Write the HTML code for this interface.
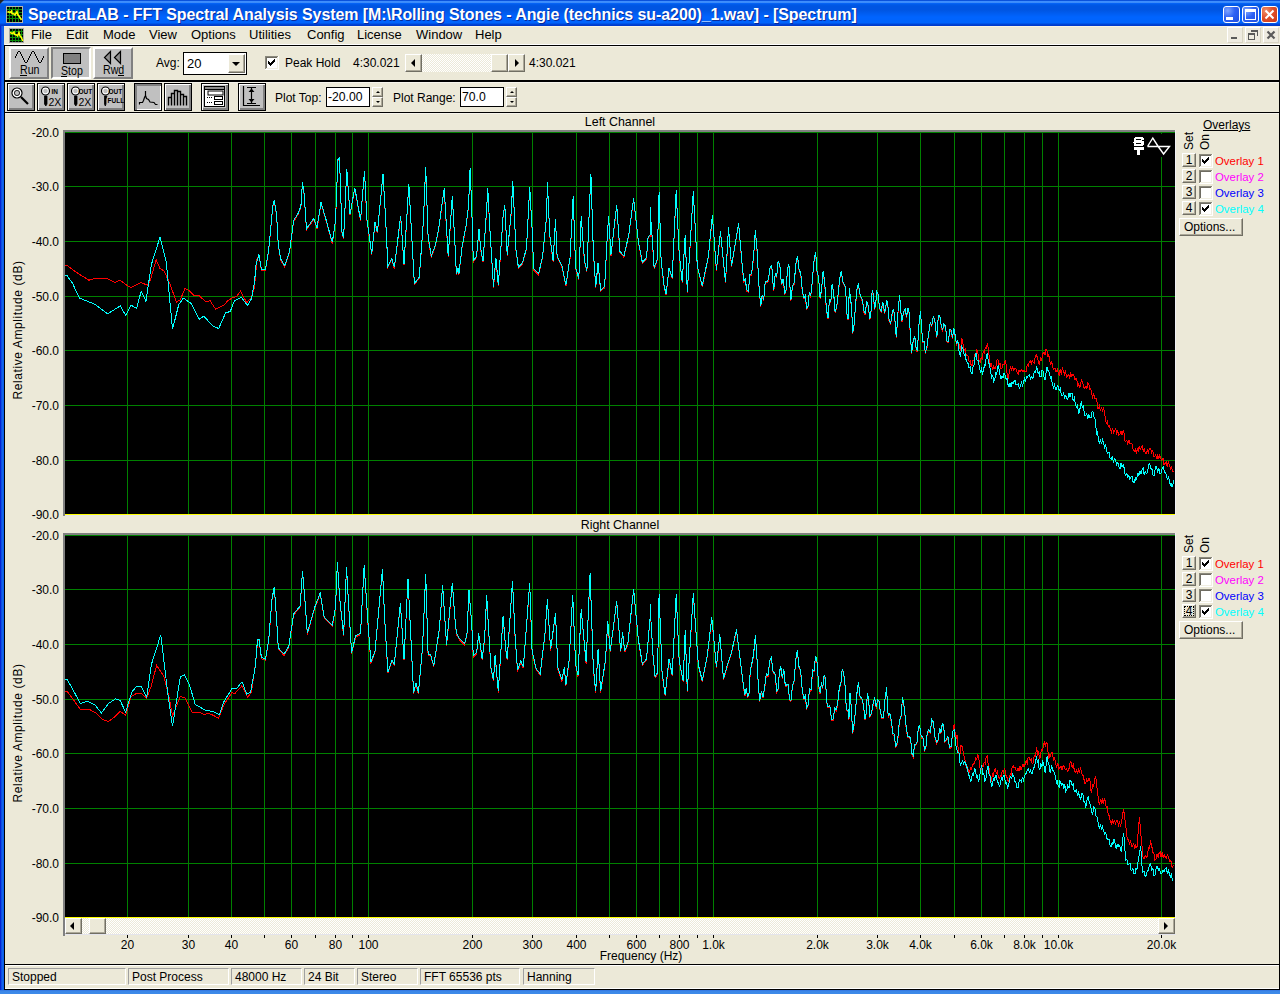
<!DOCTYPE html>
<html><head><meta charset="utf-8">
<style>
*{margin:0;padding:0;box-sizing:border-box}
html,body{width:1280px;height:994px;overflow:hidden;background:#ECE9D8;font-family:"Liberation Sans",sans-serif;font-size:12px;color:#000}
.a{position:absolute}
.t{position:absolute;white-space:nowrap;line-height:1}
.tb{position:absolute;top:6px;width:17px;height:17px;border:1px solid #fff;border-radius:3px}
.rb{position:absolute;background:#C0C0C0;border-style:solid;border-width:2px;border-color:#fff #808080 #808080 #fff}
.btn{position:absolute;background:#C0C0C0;border:1px solid #000;box-shadow:inset 1px 1px 0 #fff,inset -1px -1px 0 #808080,inset -2px -2px 0 #808080}
.btnp{position:absolute;background:#C0C0C0;border:1px solid #000;box-shadow:inset 1px 1px 0 #808080,inset 2px 2px 0 #808080,inset -1px -1px 0 #fff}
.xpb{position:absolute;background:#ECE9D8;border:1px solid;border-color:#fff #716F64 #716F64 #fff;box-shadow:inset -1px -1px 0 #ACA899}
.hline{position:absolute;left:4px;width:1276px;height:1px;background:#000}
.ico{position:absolute;left:0;top:0}
</style></head>
<body>
<!-- left blue frame -->
<div class="a" style="left:0;top:0;width:4px;height:990px;background:linear-gradient(90deg,#0019CF 0,#0831D9 1px,#166AEE 2px,#0D5FEA 3px)"></div>
<div class="a" style="left:0;top:990px;width:1280px;height:4px;background:linear-gradient(#2F6FE0,#3B86E6 1px,#3E8BEA 4px)"></div>
<!-- title bar -->
<div class="a" style="left:0;top:0;width:1280px;height:26px;background:linear-gradient(#0A52DC 0,#0A52DC 1px,#3F8FFF 1px,#3A8AF8 3px,#0A68FF 3px,#005DEC 4px,#0055E2 6px,#0055E2 10px,#005CEF 13px,#0064FF 17px,#0064FC 23px,#0048D8 24px,#0036C8 26px)"></div>
<div class="a" style="left:0;top:0;width:4px;height:4px;background:linear-gradient(135deg,#222 0,#222 45%,transparent 55%)"></div>
<svg class="a" style="left:6px;top:6px" width="17" height="17" shape-rendering="crispEdges">
<rect x="0" y="0" width="17" height="17" fill="#B8B4A8"/>
<rect x="1" y="1" width="15" height="15" fill="#000"/>
<path d="M1 3.5H16M1 6.5H16M1 9.5H16M1 12.5H16M3.5 1V16M6.5 1V16M9.5 1V16M12.5 1V16" stroke="#0B8A0B" stroke-width="1"/>
<polyline points="1.5,5.5 4,6.5 5.5,5 6,7.5 8,8 9,9 11,5.5 12,9 13,10 15.5,14" fill="none" stroke="#FFFF00" stroke-width="1.6" shape-rendering="auto"/>
</svg>
<div class="t" style="left:28px;top:7px;font-size:16px;font-weight:bold;color:#fff;letter-spacing:-0.08px;text-shadow:1px 1px 0 #0A2A9A">SpectraLAB - FFT Spectral Analysis System [M:\Rolling Stones - Angie (technics su-a200)_1.wav] - [Spectrum]</div>
<!-- title buttons -->
<div class="tb" style="left:1223px;background:radial-gradient(circle at 25% 25%,#7FA6FF 0,#2E62F4 45%,#1E4EE0 100%)"></div>
<div class="a" style="left:1226px;top:17px;width:7px;height:3px;background:#fff"></div>
<div class="tb" style="left:1242px;background:radial-gradient(circle at 25% 25%,#7FA6FF 0,#2E62F4 45%,#1E4EE0 100%)"></div>
<div class="a" style="left:1245px;top:9px;width:11px;height:11px;border:1px solid #fff;border-top-width:3px"></div>
<div class="tb" style="left:1261px;background:radial-gradient(circle at 25% 25%,#F0906A 0,#E0502A 45%,#C8381A 100%)"></div>
<svg class="a" style="left:1261px;top:6px" width="17" height="17"><path d="M4.5 4.5L12.5 12.5M12.5 4.5L4.5 12.5" stroke="#fff" stroke-width="2"/></svg>

<!-- menu bar -->
<div class="a" style="left:4px;top:26px;width:1276px;height:1px;background:#F8F4E4"></div>
<svg class="a" style="left:9px;top:28px" width="15" height="15" shape-rendering="crispEdges">
<rect x="0" y="0" width="15" height="15" fill="#A8A8A8"/>
<rect x="1" y="1" width="13" height="13" fill="#000"/>
<path d="M1 3.5H14M1 6.5H14M1 9.5H14M1 12.5H14M3.5 1V14M6.5 1V14M9.5 1V14M12.5 1V14" stroke="#0B8A0B" stroke-width="1"/>
<polyline points="1,4.5 3.5,5.5 5,4 5.5,6.5 7.5,7 8.5,8 10,4.5 11,8 12,9 14,13" fill="none" stroke="#FFFF00" stroke-width="1.5" shape-rendering="auto"/>
</svg>
<div class="t" style="left:31px;top:28px;font-size:13px">File</div>
<div class="t" style="left:66px;top:28px;font-size:13px">Edit</div>
<div class="t" style="left:103px;top:28px;font-size:13px">Mode</div>
<div class="t" style="left:149px;top:28px;font-size:13px">View</div>
<div class="t" style="left:191px;top:28px;font-size:13px">Options</div>
<div class="t" style="left:249px;top:28px;font-size:13px">Utilities</div>
<div class="t" style="left:307px;top:28px;font-size:13px">Config</div>
<div class="t" style="left:357px;top:28px;font-size:13px">License</div>
<div class="t" style="left:416px;top:28px;font-size:13px">Window</div>
<div class="t" style="left:475px;top:28px;font-size:13px">Help</div>
<!-- MDI buttons -->
<div class="a" style="left:1227px;top:27px;width:16px;height:16px;background:#EEEBE0;border:1px solid;border-color:#fff #D8D4C4 #D8D4C4 #fff"></div>
<div class="a" style="left:1231px;top:37px;width:6px;height:2px;background:#5A5A5A"></div>
<div class="a" style="left:1245px;top:27px;width:16px;height:16px;background:#EEEBE0;border:1px solid;border-color:#fff #D8D4C4 #D8D4C4 #fff"></div>
<svg class="a" style="left:1245px;top:27px" width="16" height="16" shape-rendering="crispEdges"><path d="M6 3.5H12.5V9M6.5 3V5M3 6.5H9.5M3.5 6V12.5H9.5V6" fill="none" stroke="#5A5A5A" stroke-width="1"/><rect x="6" y="3" width="7" height="2" fill="#5A5A5A"/><rect x="3" y="6" width="7" height="2" fill="#5A5A5A"/></svg>
<div class="a" style="left:1263px;top:27px;width:16px;height:16px;background:#EEEBE0;border:1px solid;border-color:#fff #D8D4C4 #D8D4C4 #fff"></div>
<svg class="a" style="left:1263px;top:27px" width="16" height="16"><path d="M4.5 4.5L11.5 11.5M11.5 4.5L4.5 11.5" stroke="#5A5A5A" stroke-width="2.2"/></svg>

<div class="a" style="left:5px;top:44px;width:1275px;height:1px;background:#fff"></div>
<div class="hline" style="top:45px"></div>
<div class="a" style="left:5px;top:46px;width:1274px;height:1px;background:#F6F4EC"></div>
<div class="hline" style="top:80px;height:2px"></div>
<div class="a" style="left:5px;top:82px;width:1274px;height:1px;background:#F6F4EC"></div>
<div class="hline" style="top:112px"></div>
<div class="a" style="left:5px;top:113px;width:1274px;height:1px;background:#F6F4EC"></div>

<!-- toolbar 1 -->
<div class="rb" style="left:9px;top:47px;width:40px;height:32px"></div>
<div class="a" style="left:51px;top:47px;width:40px;height:32px;background:#C0C0C0;border-style:solid;border-width:2px;border-color:#808080 #fff #fff #808080"></div>
<div class="rb" style="left:93px;top:47px;width:40px;height:32px"></div>
<svg class="ico" width="140" height="80" shape-rendering="crispEdges">
<g fill="#000"><rect x="15" y="56" width="1" height="2"/><rect x="16" y="54" width="1" height="2"/><rect x="17" y="52" width="1" height="2"/><rect x="18" y="51" width="1" height="1"/><rect x="19" y="51" width="1" height="1"/><rect x="20" y="52" width="1" height="2"/><rect x="21" y="54" width="1" height="2"/><rect x="22" y="56" width="1" height="2"/><rect x="23" y="58" width="1" height="2"/><rect x="24" y="60" width="1" height="2"/><rect x="25" y="62" width="1" height="1"/><rect x="26" y="62" width="1" height="1"/><rect x="27" y="60" width="1" height="2"/><rect x="28" y="58" width="1" height="2"/><rect x="29" y="56" width="1" height="2"/><rect x="30" y="54" width="1" height="2"/><rect x="31" y="52" width="1" height="2"/><rect x="32" y="51" width="1" height="1"/><rect x="33" y="51" width="1" height="1"/><rect x="34" y="52" width="1" height="2"/><rect x="35" y="54" width="1" height="2"/><rect x="36" y="56" width="1" height="2"/><rect x="37" y="58" width="1" height="2"/><rect x="38" y="60" width="1" height="2"/><rect x="39" y="62" width="1" height="1"/><rect x="40" y="62" width="1" height="1"/><rect x="41" y="60" width="1" height="2"/><rect x="42" y="58" width="1" height="2"/><rect x="43" y="56" width="1" height="2"/></g>
<rect x="63" y="53" width="18" height="11" fill="#000"/><rect x="64" y="54" width="16" height="9" fill="#808080"/>
<path d="M110.5,51.5 L104.5,57.5 L110.5,63.5 Z M120.5,51.5 L114.5,57.5 L120.5,63.5 Z" fill="#909090" stroke="#000" stroke-width="1.2" shape-rendering="auto"/>
<rect x="20" y="75" width="7" height="1" fill="#000"/>
<rect x="61" y="76" width="6" height="1" fill="#000"/>
<rect x="118" y="75" width="6" height="1" fill="#000"/>
</svg>
<div class="t" style="left:20px;top:64px;font-size:12.8px;transform:scaleX(0.83);transform-origin:0 0">Run</div>
<div class="t" style="left:61px;top:65px;font-size:12.8px;transform:scaleX(0.83);transform-origin:0 0">Stop</div>
<div class="t" style="left:103px;top:64px;font-size:12.8px;transform:scaleX(0.83);transform-origin:0 0">Rwd</div>

<div class="t" style="left:156px;top:57px">Avg:</div>
<div class="a" style="left:183px;top:52px;width:64px;height:23px;background:#fff;border:1px solid #000"></div>
<div class="t" style="left:187px;top:57px;font-size:13px">20</div>
<div class="xpb" style="left:228px;top:54px;width:17px;height:19px"></div>
<div class="a" style="left:232px;top:62px;width:0;height:0;border-left:4px solid transparent;border-right:4px solid transparent;border-top:4px solid #000"></div>

<svg class="a" style="left:265px;top:56px" width="14" height="14" shape-rendering="crispEdges"><rect width="14" height="14" fill="#fff"/><rect width="13" height="1" fill="#8A887C"/><rect width="1" height="13" fill="#8A887C"/><rect x="1" y="1" width="11" height="1" fill="#6E6C62"/><rect x="1" y="1" width="1" height="11" fill="#6E6C62"/><rect x="1" y="12" width="12" height="1" fill="#F1EFE2"/><rect x="12" y="1" width="1" height="12" fill="#F1EFE2"/><rect x="3" y="5" width="1" height="3" fill="#000"/><rect x="4" y="6" width="1" height="3" fill="#000"/><rect x="5" y="7" width="1" height="3" fill="#000"/><rect x="6" y="6" width="1" height="3" fill="#000"/><rect x="7" y="5" width="1" height="3" fill="#000"/><rect x="8" y="4" width="1" height="3" fill="#000"/><rect x="9" y="3" width="1" height="3" fill="#000"/></svg>
<div class="t" style="left:285px;top:57px">Peak Hold</div>
<div class="t" style="left:353px;top:57px">4:30.021</div>
<div class="a" style="left:405px;top:54px;width:120px;height:18px;background-color:#F4F3EE;background-image:repeating-conic-gradient(#fff 0 25%,#ECE9D8 0 50%);background-size:2px 2px"></div>
<div class="xpb" style="left:405px;top:54px;width:17px;height:18px"></div>
<div class="a" style="left:411px;top:59px;width:0;height:0;border-top:4px solid transparent;border-bottom:4px solid transparent;border-right:4px solid #000"></div>
<div class="xpb" style="left:491px;top:54px;width:17px;height:18px"></div>
<div class="xpb" style="left:508px;top:54px;width:17px;height:18px"></div>
<div class="a" style="left:515px;top:59px;width:0;height:0;border-top:4px solid transparent;border-bottom:4px solid transparent;border-left:4px solid #000"></div>
<div class="t" style="left:529px;top:57px">4:30.021</div>

<!-- toolbar 2 -->
<div class="btn" style="left:7px;top:83px;width:28px;height:28px"></div>
<div class="btn" style="left:37px;top:83px;width:28px;height:28px"></div>
<div class="btn" style="left:67px;top:83px;width:28px;height:28px"></div>
<div class="btn" style="left:97px;top:83px;width:28px;height:28px"></div>
<div class="btnp" style="left:134px;top:83px;width:28px;height:28px"></div>
<div class="btn" style="left:164px;top:83px;width:28px;height:28px"></div>
<div class="btn" style="left:201px;top:83px;width:28px;height:28px"></div>
<div class="btn" style="left:238px;top:83px;width:28px;height:28px"></div>
<svg class="ico" width="270" height="114">
<!-- magnifier -->
<circle cx="17" cy="93" r="5" fill="none" stroke="#000" stroke-width="1.2"/>
<circle cx="17" cy="93" r="3.6" fill="none" stroke="#fff" stroke-width="1.4"/>
<circle cx="17" cy="93" r="2.6" fill="none" stroke="#000" stroke-width="0.8"/>
<path d="M21,97 L28,104" stroke="#000" stroke-width="2.2"/>
<!-- in 2x -->
<circle cx="45.5" cy="91" r="4" fill="#fff" stroke="#000" stroke-width="1.2"/>
<circle cx="45.5" cy="91" r="2.3" fill="#C0C0C0"/>
<path d="M44.5,96 H47 V104 L45.8,106 L44.5,104 Z" fill="#000" stroke="#000" stroke-width="0.8"/>
<text x="51.5" y="94" font-size="6.5" font-weight="bold" font-family="Liberation Sans">IN</text>
<text x="48.5" y="106" font-size="10.5" font-family="Liberation Sans">2X</text>
<!-- out 2x -->
<circle cx="75.5" cy="91" r="4" fill="#fff" stroke="#000" stroke-width="1.2"/>
<circle cx="75.5" cy="91" r="2.3" fill="#C0C0C0"/>
<path d="M74.5,96 H77 V104 L75.8,106 L74.5,104 Z" fill="#000" stroke="#000" stroke-width="0.8"/>
<text x="78.5" y="94" font-size="6.5" font-weight="bold" font-family="Liberation Sans">OUT</text>
<text x="78.5" y="106" font-size="10.5" font-family="Liberation Sans">2X</text>
<!-- out full -->
<circle cx="105.5" cy="91" r="4" fill="#fff" stroke="#000" stroke-width="1.2"/>
<circle cx="105.5" cy="91" r="2.3" fill="#C0C0C0"/>
<path d="M104.5,96 H107 L106,99 V104 L105.3,106 L104.5,104 Z" fill="#000" stroke="#000" stroke-width="0.8"/>
<text x="108.5" y="94" font-size="6.5" font-weight="bold" font-family="Liberation Sans">OUT</text>
<text x="107.5" y="103" font-size="6.5" font-weight="bold" font-family="Liberation Sans">FULL</text>
<!-- spectrum -->
<polyline points="139.5,104.5 139.5,102.5 142.5,102.5 143.5,100.5 144.5,97.5 145.5,95.5 145.5,91 145.5,95.5 146.5,98.5 148.5,99.5 150,102 154,102.5 155.5,104.5 157.5,104.5" fill="none" stroke="#000" stroke-width="1.2"/>
<!-- bars -->
<path d="M168.5,105.5 V97.5 H171.5 V93.5 H174.5 V90.5 H177.5 V91.5 H180.5 V94.5 H183.5 V96.5 H186.5 V105.5 M171.5,97.5 V105.5 M174.5,93.5 V105.5 M177.5,90.5 V105.5 M180.5,91.5 V105.5 M183.5,94.5 V105.5" fill="none" stroke="#000" stroke-width="1.4"/>
<!-- form -->
<rect x="204" y="86" width="21" height="21" fill="#000"/>
<rect x="205" y="90" width="19" height="16" fill="#fff"/>
<rect x="205" y="87" width="19" height="2" fill="#fff" opacity="0.55"/>
<rect x="208" y="91" width="15" height="4" fill="none" stroke="#000" stroke-width="1"/>
<rect x="214.5" y="96.5" width="8" height="3" fill="none" stroke="#000" stroke-width="1"/>
<rect x="214.5" y="101.5" width="8" height="3" fill="none" stroke="#000" stroke-width="1"/>
<path d="M207,97.5 H212 M207,102.5 H212" stroke="#000" stroke-width="1" stroke-dasharray="1 1"/>
<!-- range -->
<path d="M243.5,86 V105.5 H260" fill="none" stroke="#000" stroke-width="1.2"/>
<path d="M247,87.5 H256 M247,103.5 H256 M251.5,88 V103" fill="none" stroke="#000" stroke-width="1.2"/>
<path d="M248.5,92 L251.5,88.5 L254.5,92 Z M248.5,99 L251.5,102.5 L254.5,99 Z" fill="#000"/>
</svg>

<div class="t" style="left:275px;top:92px">Plot Top:</div>
<div class="a" style="left:326px;top:87px;width:44px;height:20px;background:#fff;border:1px solid #000"></div>
<div class="t" style="left:328px;top:91px;font-size:12.2px">-20.00</div>
<div class="xpb" style="left:372px;top:87px;width:11px;height:10px"></div>
<div class="xpb" style="left:372px;top:97px;width:11px;height:10px"></div>
<div class="a" style="left:376px;top:91px;width:0;height:0;border-left:2px solid transparent;border-right:2px solid transparent;border-bottom:2px solid #000"></div>
<div class="a" style="left:376px;top:101px;width:0;height:0;border-left:2px solid transparent;border-right:2px solid transparent;border-top:2px solid #000"></div>
<div class="t" style="left:393px;top:92px">Plot Range:</div>
<div class="a" style="left:460px;top:87px;width:44px;height:20px;background:#fff;border:1px solid #000"></div>
<div class="t" style="left:462px;top:91px;font-size:12.2px">70.0</div>
<div class="xpb" style="left:506px;top:87px;width:11px;height:10px"></div>
<div class="xpb" style="left:506px;top:97px;width:11px;height:10px"></div>
<div class="a" style="left:510px;top:91px;width:0;height:0;border-left:2px solid transparent;border-right:2px solid transparent;border-bottom:2px solid #000"></div>
<div class="a" style="left:510px;top:101px;width:0;height:0;border-left:2px solid transparent;border-right:2px solid transparent;border-top:2px solid #000"></div>

<!-- client borders -->
<div class="a" style="left:1279px;top:45px;width:1px;height:945px;background:#000"></div>
<div class="a" style="left:4px;top:45px;width:1px;height:945px;background:#000"></div>

<svg class="a" style="left:0;top:0" width="1280" height="994" shape-rendering="crispEdges">
<rect x="63" y="130" width="1113" height="2" fill="#808080"/>
<rect x="63" y="130" width="2" height="386" fill="#808080"/>
<rect x="1175" y="130" width="1" height="385" fill="#F0F0F4"/>
<rect x="65" y="515" width="1111" height="1" fill="#E4E4EC"/>
<rect x="65" y="132" width="1110" height="383" fill="#000"/>
<rect x="65" y="132" width="1110" height="1" fill="#008000"/>
<rect x="65" y="186" width="1110" height="1" fill="#008000"/>
<rect x="65" y="241" width="1110" height="1" fill="#008000"/>
<rect x="65" y="296" width="1110" height="1" fill="#008000"/>
<rect x="65" y="350" width="1110" height="1" fill="#008000"/>
<rect x="65" y="405" width="1110" height="1" fill="#008000"/>
<rect x="65" y="460" width="1110" height="1" fill="#008000"/>
<rect x="65" y="514" width="1110" height="1" fill="#FFFF00"/>
<rect x="127" y="133" width="1" height="381" fill="#008000"/>
<rect x="188" y="133" width="1" height="381" fill="#008000"/>
<rect x="231" y="133" width="1" height="381" fill="#008000"/>
<rect x="264" y="133" width="1" height="381" fill="#008000"/>
<rect x="291" y="133" width="1" height="381" fill="#008000"/>
<rect x="315" y="133" width="1" height="381" fill="#008000"/>
<rect x="335" y="133" width="1" height="381" fill="#008000"/>
<rect x="352" y="133" width="1" height="381" fill="#008000"/>
<rect x="368" y="133" width="1" height="381" fill="#008000"/>
<rect x="472" y="133" width="1" height="381" fill="#008000"/>
<rect x="532" y="133" width="1" height="381" fill="#008000"/>
<rect x="576" y="133" width="1" height="381" fill="#008000"/>
<rect x="609" y="133" width="1" height="381" fill="#008000"/>
<rect x="636" y="133" width="1" height="381" fill="#008000"/>
<rect x="659" y="133" width="1" height="381" fill="#008000"/>
<rect x="679" y="133" width="1" height="381" fill="#008000"/>
<rect x="697" y="133" width="1" height="381" fill="#008000"/>
<rect x="713" y="133" width="1" height="381" fill="#008000"/>
<rect x="817" y="133" width="1" height="381" fill="#008000"/>
<rect x="877" y="133" width="1" height="381" fill="#008000"/>
<rect x="920" y="133" width="1" height="381" fill="#008000"/>
<rect x="954" y="133" width="1" height="381" fill="#008000"/>
<rect x="981" y="133" width="1" height="381" fill="#008000"/>
<rect x="1004" y="133" width="1" height="381" fill="#008000"/>
<rect x="1024" y="133" width="1" height="381" fill="#008000"/>
<rect x="1042" y="133" width="1" height="381" fill="#008000"/>
<rect x="1058" y="133" width="1" height="381" fill="#008000"/>
<rect x="1161" y="133" width="1" height="381" fill="#008000"/>
<rect x="63" y="533" width="1113" height="2" fill="#808080"/>
<rect x="63" y="533" width="2" height="386" fill="#808080"/>
<rect x="1175" y="533" width="1" height="385" fill="#F0F0F4"/>
<rect x="65" y="918" width="1111" height="1" fill="#E4E4EC"/>
<rect x="65" y="535" width="1110" height="383" fill="#000"/>
<rect x="65" y="535" width="1110" height="1" fill="#008000"/>
<rect x="65" y="589" width="1110" height="1" fill="#008000"/>
<rect x="65" y="644" width="1110" height="1" fill="#008000"/>
<rect x="65" y="699" width="1110" height="1" fill="#008000"/>
<rect x="65" y="753" width="1110" height="1" fill="#008000"/>
<rect x="65" y="808" width="1110" height="1" fill="#008000"/>
<rect x="65" y="863" width="1110" height="1" fill="#008000"/>
<rect x="65" y="917" width="1110" height="1" fill="#FFFF00"/>
<rect x="127" y="536" width="1" height="381" fill="#008000"/>
<rect x="188" y="536" width="1" height="381" fill="#008000"/>
<rect x="231" y="536" width="1" height="381" fill="#008000"/>
<rect x="264" y="536" width="1" height="381" fill="#008000"/>
<rect x="291" y="536" width="1" height="381" fill="#008000"/>
<rect x="315" y="536" width="1" height="381" fill="#008000"/>
<rect x="335" y="536" width="1" height="381" fill="#008000"/>
<rect x="352" y="536" width="1" height="381" fill="#008000"/>
<rect x="368" y="536" width="1" height="381" fill="#008000"/>
<rect x="472" y="536" width="1" height="381" fill="#008000"/>
<rect x="532" y="536" width="1" height="381" fill="#008000"/>
<rect x="576" y="536" width="1" height="381" fill="#008000"/>
<rect x="609" y="536" width="1" height="381" fill="#008000"/>
<rect x="636" y="536" width="1" height="381" fill="#008000"/>
<rect x="659" y="536" width="1" height="381" fill="#008000"/>
<rect x="679" y="536" width="1" height="381" fill="#008000"/>
<rect x="697" y="536" width="1" height="381" fill="#008000"/>
<rect x="713" y="536" width="1" height="381" fill="#008000"/>
<rect x="817" y="536" width="1" height="381" fill="#008000"/>
<rect x="877" y="536" width="1" height="381" fill="#008000"/>
<rect x="920" y="536" width="1" height="381" fill="#008000"/>
<rect x="954" y="536" width="1" height="381" fill="#008000"/>
<rect x="981" y="536" width="1" height="381" fill="#008000"/>
<rect x="1004" y="536" width="1" height="381" fill="#008000"/>
<rect x="1024" y="536" width="1" height="381" fill="#008000"/>
<rect x="1042" y="536" width="1" height="381" fill="#008000"/>
<rect x="1058" y="536" width="1" height="381" fill="#008000"/>
<rect x="1161" y="536" width="1" height="381" fill="#008000"/>
<rect x="63" y="917" width="2" height="19" fill="#808080"/>
<rect x="65" y="934" width="1111" height="1" fill="#E4E4EC"/>
<rect x="127" y="935" width="1" height="3" fill="#000"/>
<rect x="188" y="935" width="1" height="3" fill="#000"/>
<rect x="231" y="935" width="1" height="3" fill="#000"/>
<rect x="264" y="935" width="1" height="3" fill="#000"/>
<rect x="291" y="935" width="1" height="3" fill="#000"/>
<rect x="315" y="935" width="1" height="3" fill="#000"/>
<rect x="335" y="935" width="1" height="3" fill="#000"/>
<rect x="352" y="935" width="1" height="3" fill="#000"/>
<rect x="368" y="935" width="1" height="3" fill="#000"/>
<rect x="472" y="935" width="1" height="3" fill="#000"/>
<rect x="532" y="935" width="1" height="3" fill="#000"/>
<rect x="576" y="935" width="1" height="3" fill="#000"/>
<rect x="609" y="935" width="1" height="3" fill="#000"/>
<rect x="636" y="935" width="1" height="3" fill="#000"/>
<rect x="659" y="935" width="1" height="3" fill="#000"/>
<rect x="679" y="935" width="1" height="3" fill="#000"/>
<rect x="697" y="935" width="1" height="3" fill="#000"/>
<rect x="713" y="935" width="1" height="3" fill="#000"/>
<rect x="817" y="935" width="1" height="3" fill="#000"/>
<rect x="877" y="935" width="1" height="3" fill="#000"/>
<rect x="920" y="935" width="1" height="3" fill="#000"/>
<rect x="954" y="935" width="1" height="3" fill="#000"/>
<rect x="981" y="935" width="1" height="3" fill="#000"/>
<rect x="1004" y="935" width="1" height="3" fill="#000"/>
<rect x="1024" y="935" width="1" height="3" fill="#000"/>
<rect x="1042" y="935" width="1" height="3" fill="#000"/>
<rect x="1058" y="935" width="1" height="3" fill="#000"/>
<rect x="1161" y="935" width="1" height="3" fill="#000"/>
<polyline points="65.0,265.3 67.0,265.3 74.1,270.8 78.8,273.9 88.9,280.2 94.4,278.6 106.9,278.6 114.7,282.5 120.2,280.2 127.2,285.6 131.1,287.5 141.2,282.5 147.5,285.3 150.6,279.4 156.1,259.8 160.0,268.4 163.9,270.8 169.4,282.5 176.4,302.0 180.3,299.7 185.0,288.3 188.9,290.3 194.4,295.8 199.1,295.8 206.1,302.0 210.0,300.5 215.5,309.1 224.1,305.2 228.0,300.5 231.9,298.1 236.6,296.6 240.5,291.1 246.7,302.8 251.4,297.3 254.5,287.2 256.9,259.1 259.0,255.7 261.4,270.2 265.5,270.2 268.7,250.9 271.1,225.1 272.7,207.4 274.3,201.0 276.7,217.1 278.3,246.0 280.8,260.5 284.8,267.0 289.6,252.5 293.6,221.9 298.5,213.8 300.9,207.4 302.5,183.2 304.1,194.5 306.5,229.9 313.8,219.5 317.0,229.1 321.0,203.4 325.9,220.3 332.3,243.6 335.5,221.9 337.9,160.7 339.5,159.1 342.0,233.2 343.6,238.8 346.8,170.4 350.0,215.4 354.8,188.9 360.5,221.1 364.5,172.0 366.9,220.3 371.7,254.9 375.0,223.5 377.4,233.2 383.0,175.2 385.4,215.4 387.9,267.0 391.9,259.7 394.3,268.6 400.7,217.1 404.0,265.4 408.8,184.8 414.4,284.7 419.3,278.2 423.3,223.5 425.7,167.9 428.1,238.0 431.3,257.3 435.4,246.0 438.6,229.9 444.2,189.7 448.2,257.3 452.3,196.9 455.0,246.0 456.4,275.0 458.1,269.4 458.9,275.0 462.1,247.6 466.1,226.7 468.5,207.4 470.1,169.5 471.7,207.4 473.3,262.1 476.6,257.3 479.0,229.9 480.6,249.3 483.0,262.1 486.2,217.1 487.8,189.7 489.5,223.5 493.5,287.9 495.9,258.9 498.3,286.3 503.1,217.1 504.8,205.8 507.2,255.7 511.2,213.8 512.8,182.4 516.0,250.9 518.4,268.6 522.5,263.8 526.5,249.3 529.7,188.1 532.1,229.9 533.7,270.2 538.6,275.0 542.6,257.3 546.6,217.1 547.4,183.2 549.8,236.4 553.1,262.1 555.5,220.3 557.1,257.3 561.9,267.0 565.9,286.3 570.0,258.9 573.2,196.9 575.6,268.6 578.8,279.9 581.2,217.1 584.5,262.1 586.9,271.8 589.3,210.6 590.9,175.2 593.3,250.9 595.7,287.9 598.1,263.8 600.6,291.1 604.6,287.9 607.0,242.8 608.6,217.1 611.0,255.7 616.7,205.8 619.9,252.5 623.9,257.3 628.7,236.4 633.6,199.3 638.4,242.8 642.4,263.8 646.5,258.9 648.1,238.0 650.0,236.4 650.0,208.6 652.6,244.8 654.1,268.9 657.1,260.9 659.1,193.5 661.1,260.9 664.1,287.0 666.1,295.1 669.1,268.9 672.2,279.0 676.2,191.5 679.2,254.9 682.2,283.0 685.2,236.7 687.3,293.1 693.3,192.5 697.3,266.9 702.3,287.0 708.4,256.9 712.4,216.6 716.4,270.9 720.5,232.7 725.5,283.0 728.5,228.7 731.5,266.9 733.5,254.9 738.6,224.7 742.6,270.9 743.9,282.5 745.3,279.1 746.6,291.1 748.3,292.4 750.0,275.5 751.6,275.0 753.5,258.4 755.3,231.7 757.1,251.5 758.9,285.8 760.7,307.2 762.2,296.1 763.7,300.6 765.2,282.9 766.7,283.0 768.4,281.0 770.1,268.1 771.8,266.9 772.8,282.4 773.8,291.1 775.2,275.1 776.7,277.4 778.2,261.9 779.9,267.0 781.5,285.4 783.2,279.9 784.8,295.1 786.2,290.6 787.5,269.5 788.9,264.9 789.9,286.7 790.9,301.1 792.5,287.0 794.2,284.1 795.9,264.7 797.5,256.9 799.1,271.2 800.7,274.0 802.3,291.7 804.0,299.1 805.3,296.9 806.6,309.2 808.0,307.2 809.3,293.4 810.7,297.5 812.0,285.0 813.8,263.4 815.6,252.8 817.1,273.3 818.6,278.0 820.1,299.1 821.6,290.4 823.1,272.0 824.7,283.6 826.4,310.5 828.1,319.2 829.4,300.9 830.8,302.8 832.1,285.0 833.6,293.3 835.1,313.2 836.6,308.4 838.2,295.1 839.7,279.6 841.2,272.0 843.1,283.7 845.0,287.0 845.7,292.2 846.4,304.0 847.2,318.1 848.1,320.1 848.9,300.2 849.7,289.5 850.5,303.1 851.3,304.0 851.9,314.4 852.6,333.8 853.9,328.1 855.3,308.8 856.9,290.4 858.5,284.7 859.7,294.1 860.9,297.6 862.5,301.8 864.2,313.7 865.4,314.7 866.6,302.4 868.2,306.4 869.8,320.1 871.0,312.5 872.2,291.1 873.4,296.2 874.6,310.4 875.7,304.9 876.7,292.7 878.1,295.3 879.5,308.8 881.1,312.5 882.7,304.0 883.5,304.8 884.3,313.7 885.5,310.6 886.7,300.8 887.9,306.9 889.1,321.7 890.7,324.5 892.3,313.7 893.5,310.0 894.8,318.5 895.6,331.6 896.4,337.8 898.0,312.9 899.6,296.0 900.8,312.2 902.0,321.7 903.6,312.8 905.2,310.4 906.6,317.7 907.9,308.9 909.2,313.7 910.5,339.0 911.7,353.9 913.3,341.1 914.9,337.8 916.1,348.8 917.3,352.3 918.9,326.3 920.5,312.1 921.7,330.9 922.9,342.6 924.1,342.7 925.3,353.9 927.0,347.7 928.6,334.6 930.2,324.0 931.8,326.6 933.4,316.9 935.0,323.3 936.6,337.8 937.4,334.2 938.2,316.9 939.8,316.3 941.4,328.2 942.7,330.8 943.9,324.9 945.5,327.3 947.1,342.6 948.4,342.7 949.8,330.6 951.1,331.4 952.5,339.4 953.8,329.0 955.1,336.2 956.5,345.5 957.8,341.1 959.2,344.7 960.5,351.4 961.8,337.9 963.2,344.7 964.2,350.4 965.2,349.3 966.2,355.3 967.2,355.9 968.2,356.1 969.1,361.9 970.1,360.6 971.1,364.9 972.0,365.6 973.0,360.5 974.0,360.5 974.9,354.0 975.9,353.6 976.9,349.5 977.9,352.8 979.0,360.6 980.1,362.4 981.1,357.8 982.2,358.9 983.2,351.5 984.2,353.0 985.3,347.6 986.3,348.5 987.3,343.1 988.4,348.4 989.5,360.5 990.6,365.6 991.6,364.1 992.6,370.3 993.6,366.3 994.6,368.8 995.7,368.2 996.7,360.7 997.8,359.2 998.9,364.6 1000.0,363.2 1001.0,368.8 1002.0,368.4 1003.0,363.8 1004.0,364.7 1005.1,360.8 1006.1,364.2 1007.2,374.8 1008.3,378.5 1009.5,371.0 1010.7,367.2 1011.7,370.0 1012.7,366.8 1013.7,369.7 1014.7,368.8 1015.9,368.9 1017.1,372.0 1018.1,374.5 1019.1,370.1 1020.0,372.2 1021.0,369.7 1022.0,370.4 1023.0,371.9 1024.1,370.0 1025.2,372.0 1026.2,371.8 1027.2,364.4 1028.2,366.4 1029.2,362.4 1030.2,360.7 1031.2,363.9 1032.2,360.9 1033.2,362.4 1034.3,362.9 1035.4,356.0 1036.5,355.9 1036.6,357.2 1036.8,355.7 1037.7,357.4 1038.6,364.0 1039.4,364.2 1040.5,358.3 1041.7,360.2 1042.8,353.9 1043.9,351.9 1045.0,354.8 1046.0,349.0 1047.1,351.4 1048.0,356.7 1048.8,354.6 1049.7,360.8 1050.7,364.1 1051.8,361.9 1052.9,368.1 1053.9,369.3 1055.0,368.4 1056.1,371.9 1057.2,369.2 1058.2,372.8 1059.2,374.9 1060.3,368.9 1061.3,374.5 1062.3,368.3 1063.4,371.0 1064.4,374.4 1065.5,370.4 1066.6,377.5 1067.6,376.2 1068.7,374.2 1069.7,378.6 1070.7,373.4 1071.7,376.1 1072.8,374.5 1073.8,375.2 1074.9,379.8 1076.0,378.3 1077.0,381.3 1077.9,386.6 1078.7,382.8 1079.6,388.1 1080.5,385.2 1081.3,379.6 1082.4,381.4 1083.6,387.4 1084.7,388.1 1085.8,386.1 1086.9,388.5 1087.9,382.8 1089.0,384.7 1089.9,389.0 1090.7,388.6 1091.6,393.3 1092.6,397.5 1093.7,394.0 1094.8,398.8 1095.8,398.4 1096.7,398.9 1097.6,408.0 1098.4,408.7 1099.4,405.7 1100.5,411.1 1101.5,406.9 1102.5,411.1 1103.5,408.7 1104.4,411.0 1105.3,418.9 1106.3,423.3 1107.3,421.7 1108.3,426.6 1109.4,425.4 1110.4,429.2 1111.5,432.3 1112.5,427.9 1113.6,432.6 1114.7,430.9 1115.7,428.8 1116.7,433.3 1117.7,430.6 1118.8,435.2 1119.8,434.3 1120.9,431.0 1122.1,434.9 1123.2,430.9 1124.1,432.9 1124.9,440.8 1125.8,441.2 1126.8,440.5 1127.8,444.0 1128.9,440.1 1129.9,443.9 1130.9,442.9 1132.0,443.6 1133.2,450.5 1134.3,451.4 1135.3,449.1 1136.3,453.0 1137.3,449.2 1138.2,451.2 1139.2,446.3 1140.2,449.6 1141.2,448.0 1142.2,446.2 1143.2,451.4 1144.2,448.7 1145.3,453.3 1146.3,453.1 1147.4,450.0 1148.4,452.4 1149.5,448.3 1150.6,448.0 1151.6,452.6 1152.7,450.3 1153.8,456.9 1154.9,456.6 1155.8,454.8 1156.8,459.3 1157.8,455.4 1158.8,459.2 1159.8,455.0 1160.8,458.3 1161.9,460.6 1163.0,457.9 1164.0,465.0 1165.1,463.4 1166.2,461.8 1167.2,466.9 1168.3,462.3 1169.4,465.1 1170.5,469.1 1171.5,467.0 1172.6,471.8 1173.7,472.0" fill="none" stroke="#FF0000" stroke-width="1" shape-rendering="crispEdges"/>
<polyline points="65.0,275.5 67.0,275.5 72.5,283.3 79.5,298.1 83.4,299.7 95.2,304.4 101.4,309.1 107.7,313.8 120.2,305.9 125.6,315.3 131.1,305.2 136.6,308.3 141.2,291.1 145.9,301.2 151.4,264.5 160.0,237.2 166.2,261.4 172.5,329.4 178.8,304.4 183.4,298.1 191.2,303.6 199.1,319.2 203.8,316.1 212.3,325.5 218.6,328.6 225.6,313.0 230.3,311.4 234.2,301.2 241.2,297.3 247.5,305.2 251.4,298.9 254.5,282.5 256.1,263.8 256.6,262.6 259.0,254.5 261.4,269.0 265.5,269.0 268.7,249.7 271.1,223.9 272.7,206.2 274.3,199.8 276.7,215.9 278.3,244.8 280.8,259.3 284.8,265.8 289.6,251.3 293.6,220.7 298.5,212.6 300.9,206.2 302.5,182.0 304.1,193.3 306.5,228.7 313.8,218.3 317.0,227.9 321.0,202.2 325.9,219.1 332.3,242.4 335.5,220.7 337.9,159.5 339.5,157.9 342.0,232.0 343.6,237.6 346.8,169.2 350.0,214.2 354.8,187.7 360.5,219.9 364.5,170.8 366.9,219.1 371.7,253.7 375.0,222.3 377.4,232.0 383.0,174.0 385.4,214.2 387.9,265.8 391.9,258.5 394.3,267.4 400.7,215.9 404.0,264.2 408.8,183.6 414.4,283.5 419.3,277.0 423.3,222.3 425.7,166.7 428.1,236.8 431.3,256.1 435.4,244.8 438.6,228.7 444.2,188.5 448.2,256.1 452.3,195.7 455.0,244.8 456.4,273.8 458.1,268.2 458.9,273.8 462.1,246.4 466.1,225.5 468.5,206.2 470.1,168.3 471.7,206.2 473.3,260.9 476.6,256.1 479.0,228.7 480.6,248.1 483.0,260.9 486.2,215.9 487.8,188.5 489.5,222.3 493.5,286.7 495.9,257.7 498.3,285.1 503.1,215.9 504.8,204.6 507.2,254.5 511.2,212.6 512.8,181.2 516.0,249.7 518.4,267.4 522.5,262.6 526.5,248.1 529.7,186.9 532.1,228.7 533.7,269.0 538.6,273.8 542.6,256.1 546.6,215.9 547.4,182.0 549.8,235.2 553.1,260.9 555.5,219.1 557.1,256.1 561.9,265.8 565.9,285.1 570.0,257.7 573.2,195.7 575.6,267.4 578.8,278.7 581.2,215.9 584.5,260.9 586.9,270.6 589.3,209.4 590.9,174.0 593.3,249.7 595.7,286.7 598.1,262.6 600.6,289.9 604.6,286.7 607.0,241.6 608.6,215.9 611.0,254.5 616.7,204.6 619.9,251.3 623.9,256.1 628.7,235.2 633.6,198.1 638.4,241.6 642.4,262.6 646.5,257.7 648.1,236.8 650.0,235.2 650.0,207.4 652.6,243.6 654.1,267.7 657.1,259.7 659.1,192.3 661.1,259.7 664.1,285.8 666.1,293.9 669.1,267.7 672.2,277.8 676.2,190.3 679.2,253.7 682.2,281.8 685.2,235.5 687.3,291.9 693.3,191.3 697.3,265.7 702.3,285.8 708.4,255.7 712.4,215.4 716.4,269.7 720.5,231.5 725.5,281.8 728.5,227.5 731.5,265.7 733.5,253.7 738.6,223.5 742.6,269.7 743.9,281.3 745.3,277.9 746.6,289.9 748.3,291.2 750.0,274.3 751.6,273.8 753.5,257.2 755.3,230.5 757.1,250.3 758.9,284.6 760.7,306.0 762.2,294.9 763.7,299.4 765.2,281.7 766.7,281.8 768.4,279.8 770.1,266.9 771.8,265.7 772.8,281.2 773.8,289.9 775.2,273.9 776.7,276.2 778.2,260.7 779.9,265.8 781.5,284.2 783.2,278.7 784.8,293.9 786.2,289.4 787.5,268.3 788.9,263.7 789.9,285.5 790.9,299.9 792.5,285.8 794.2,282.9 795.9,263.5 797.5,255.7 799.1,270.0 800.7,272.8 802.3,290.5 804.0,297.9 805.3,295.7 806.6,308.0 808.0,306.0 809.3,292.2 810.7,296.3 812.0,283.8 813.8,262.2 815.6,251.6 817.1,272.1 818.6,276.8 820.1,297.9 821.6,289.2 823.1,270.8 824.7,282.4 826.4,309.3 828.1,318.0 829.4,299.7 830.8,301.6 832.1,283.8 833.6,292.1 835.1,312.0 836.6,307.2 838.2,293.9 839.7,278.4 841.2,270.8 843.1,282.5 845.0,285.8 845.7,291.0 846.4,302.8 847.2,316.9 848.1,318.9 848.9,299.0 849.7,288.3 850.5,301.9 851.3,302.8 851.9,313.2 852.6,332.6 853.9,326.9 855.3,307.6 856.9,289.2 858.5,283.5 859.7,292.9 860.9,296.4 862.5,300.6 864.2,312.5 865.4,313.5 866.6,301.2 868.2,305.2 869.8,318.9 871.0,311.3 872.2,289.9 873.4,295.0 874.6,309.2 875.7,303.7 876.7,291.5 878.1,294.1 879.5,307.6 881.1,311.3 882.7,302.8 883.5,303.6 884.3,312.5 885.5,309.4 886.7,299.6 887.9,305.7 889.1,320.5 890.7,323.3 892.3,312.5 893.5,308.8 894.8,317.3 895.6,330.4 896.4,336.6 898.0,311.7 899.6,294.8 900.8,311.0 902.0,320.5 903.6,311.6 905.2,309.2 906.6,316.5 907.9,307.7 909.2,312.5 910.5,337.8 911.7,352.7 913.3,339.9 914.9,336.6 916.1,347.6 917.3,351.1 918.9,325.1 920.5,310.9 921.7,329.7 922.9,341.4 924.1,341.5 925.3,352.7 927.0,346.5 928.6,333.4 930.2,322.8 931.8,325.4 933.4,315.7 935.0,322.1 936.6,336.6 937.4,333.0 938.2,315.7 939.8,315.1 941.4,327.0 942.7,329.6 943.9,323.7 945.5,326.1 947.1,341.4 948.4,341.5 949.8,329.4 951.1,330.2 952.5,338.2 953.8,327.8 955.1,335.0 956.5,344.3 957.8,339.9 959.2,352.7 960.5,355.5 961.8,346.5 963.2,349.5 964.2,355.4 965.2,354.4 966.2,360.7 967.2,362.4 968.2,363.7 969.1,367.9 970.1,366.9 971.1,372.8 972.0,373.7 973.1,366.2 974.1,364.9 975.1,356.1 976.1,352.7 977.1,360.7 978.2,360.4 979.3,367.2 980.4,371.5 981.4,368.6 982.5,373.7 983.5,371.0 984.4,364.8 985.4,365.0 986.4,355.4 987.3,354.3 988.4,361.6 989.5,364.9 990.6,372.0 991.6,377.8 992.7,375.4 993.8,381.7 994.8,379.8 995.7,372.2 996.7,375.0 997.6,366.6 998.6,365.6 999.8,373.9 1001.0,378.5 1002.0,376.6 1003.0,377.8 1004.0,373.0 1005.1,375.3 1006.1,379.5 1007.1,378.4 1008.1,385.1 1009.1,386.5 1010.0,382.8 1011.0,386.8 1012.0,382.1 1012.9,383.9 1013.9,381.7 1015.0,380.3 1016.1,384.8 1017.1,384.9 1018.2,384.1 1019.3,388.1 1020.4,386.5 1021.4,382.1 1022.5,385.6 1023.6,381.7 1024.5,378.9 1025.5,382.1 1026.5,376.6 1027.4,377.4 1028.4,375.3 1029.4,374.6 1030.4,378.7 1031.4,376.7 1032.4,378.5 1033.4,376.9 1034.4,371.2 1035.5,372.2 1036.5,367.2 1037.3,368.5 1038.2,373.7 1039.1,371.5 1040.0,376.9 1041.0,376.7 1042.0,370.2 1043.1,371.0 1044.3,378.9 1045.4,379.6 1046.2,371.0 1047.1,366.8 1048.0,370.5 1048.8,371.0 1049.7,374.5 1050.5,378.2 1051.4,377.2 1052.2,383.0 1053.4,387.8 1054.5,384.5 1055.7,389.9 1056.5,389.6 1057.4,385.3 1058.2,386.4 1059.3,390.7 1060.4,388.6 1061.4,395.1 1062.5,395.8 1063.6,393.3 1064.6,398.1 1065.7,395.7 1066.8,398.4 1067.8,399.7 1068.9,392.9 1070.0,397.1 1071.0,393.3 1072.1,393.4 1073.2,401.1 1074.3,398.0 1075.3,403.5 1076.4,407.3 1077.5,405.4 1078.5,412.9 1079.6,412.1 1080.5,404.5 1081.3,402.7 1082.4,407.7 1083.4,406.4 1084.5,415.2 1085.6,415.5 1086.7,413.8 1087.7,418.7 1088.8,415.1 1089.9,417.2 1091.0,417.7 1092.1,411.5 1093.3,412.1 1094.1,417.6 1095.0,418.9 1095.8,425.8 1096.7,433.5 1097.6,432.0 1098.4,439.5 1099.4,442.7 1100.5,439.1 1101.5,444.1 1102.5,440.0 1103.5,442.9 1104.6,447.3 1105.7,445.2 1106.7,451.6 1107.8,453.1 1109.0,452.5 1110.1,458.0 1111.2,459.1 1112.3,457.1 1113.4,461.5 1114.4,458.4 1115.5,460.0 1116.7,464.7 1117.8,462.5 1118.9,466.8 1120.0,468.7 1121.1,463.0 1122.1,467.0 1123.2,465.1 1124.1,467.7 1124.9,473.5 1125.8,475.4 1126.8,473.3 1127.8,477.3 1128.9,475.2 1129.9,479.7 1130.9,477.1 1132.0,476.4 1133.2,482.4 1134.3,482.2 1135.2,477.6 1136.0,480.4 1136.9,477.1 1137.9,473.3 1138.9,475.6 1140.0,471.1 1141.0,474.3 1142.0,470.2 1143.1,468.1 1144.2,474.9 1145.2,471.1 1146.3,473.7 1147.4,472.4 1148.6,465.3 1149.7,463.4 1150.9,468.5 1152.0,469.4 1153.1,475.4 1154.3,475.3 1155.4,466.8 1156.6,466.8 1157.7,471.6 1158.8,468.3 1160.0,473.7 1161.1,472.8 1162.3,467.9 1163.4,466.8 1164.5,472.1 1165.7,472.2 1166.8,477.1 1167.7,479.5 1168.5,477.6 1169.4,480.5 1170.2,485.1 1171.1,483.1 1172.0,487.3 1172.8,485.5 1173.7,480.5" fill="none" stroke="#00FFFF" stroke-width="1" shape-rendering="crispEdges"/>
<polyline points="65.0,691.1 67.0,691.1 73.3,699.7 80.3,709.1 88.9,709.1 95.9,713.0 102.2,719.2 108.4,721.6 114.7,716.9 120.2,711.4 125.6,715.3 131.1,696.6 136.6,693.4 141.2,693.4 146.7,698.1 151.4,685.6 156.6,665.3 163.9,676.2 169.4,698.9 172.5,716.1 180.3,696.6 185.0,698.1 192.0,712.2 199.1,712.2 203.8,714.5 208.4,713.3 213.9,715.6 218.6,718.4 224.1,704.4 231.9,692.7 235.0,693.4 242.0,685.6 247.5,697.3 251.4,692.7 255.3,665.3 256.9,650.5 257.4,641.0 259.0,640.2 261.4,658.7 265.5,660.3 268.7,641.0 271.9,600.7 274.3,587.8 276.7,621.7 278.3,649.0 284.0,655.5 288.8,647.4 293.6,615.2 300.1,607.2 302.5,572.5 304.9,600.7 307.3,634.5 314.6,608.8 320.2,594.3 324.2,618.4 332.3,626.5 335.5,608.8 337.4,562.9 339.5,597.5 343.6,636.2 346.5,568.5 349.2,615.2 351.6,653.9 355.6,637.0 360.5,634.5 364.2,566.1 367.7,620.1 370.9,663.5 375.0,652.3 382.5,570.1 384.6,618.4 387.9,673.2 391.9,661.1 394.3,665.1 400.4,604.0 404.0,660.3 408.0,579.8 413.6,694.1 416.0,684.5 418.4,694.1 422.5,649.0 425.7,575.0 428.1,655.5 430.5,655.5 433.7,666.8 439.4,629.7 442.6,586.2 446.6,645.8 452.3,583.8 455.0,620.1 456.4,634.5 459.7,640.2 464.5,645.0 466.9,636.2 469.0,591.1 471.7,624.9 473.3,657.1 476.6,653.9 478.7,634.5 482.2,660.3 484.6,639.4 486.7,596.7 489.5,645.8 491.1,670.0 493.5,681.2 495.1,656.3 498.3,692.5 503.1,616.8 505.6,649.0 507.2,660.3 512.5,582.2 515.2,639.4 517.6,671.6 520.9,661.9 523.3,668.4 529.7,584.6 532.1,652.3 536.2,670.0 540.2,674.8 545.0,634.5 547.4,600.7 550.6,650.6 555.5,614.4 557.9,669.2 561.9,681.2 564.3,668.4 565.9,686.1 569.2,660.3 572.7,595.9 575.6,665.1 578.0,676.4 581.2,610.4 586.1,663.5 590.1,574.2 593.3,668.4 595.7,692.5 598.1,649.8 600.6,692.5 605.4,661.9 607.8,622.5 610.2,652.3 616.7,602.3 620.7,652.3 622.6,632.9 624.7,652.3 627.9,644.2 633.6,590.3 638.4,641.0 642.4,665.1 646.5,660.3 650.0,620.1 650.0,605.5 653.0,655.8 655.1,677.9 657.5,673.9 659.1,595.4 662.1,673.9 665.1,696.0 669.1,659.8 672.2,675.9 676.2,595.4 679.2,661.8 683.2,681.9 685.2,631.6 687.3,692.0 693.3,594.4 698.3,665.8 702.3,681.9 707.4,655.8 711.8,618.5 716.4,667.8 719.8,635.6 723.5,679.9 727.5,665.8 731.5,653.8 736.5,630.6 743.6,688.0 744.9,696.1 746.3,689.4 747.6,698.0 749.0,694.0 750.3,671.7 751.6,665.8 753.5,656.3 755.3,636.7 756.7,653.1 758.2,684.0 759.7,702.0 761.4,692.3 763.0,698.2 764.7,688.0 766.4,674.5 768.0,676.7 769.7,661.9 771.4,658.8 773.2,673.2 775.0,674.7 776.8,692.0 778.1,689.7 779.5,672.7 780.8,667.8 782.3,679.3 783.8,670.0 785.3,687.0 786.9,685.9 788.2,685.9 789.5,700.3 790.9,702.0 792.5,686.4 794.1,682.0 795.7,661.1 797.3,651.7 799.0,667.6 800.6,671.9 802.3,691.1 804.0,700.0 805.3,697.2 806.6,708.8 808.0,706.1 809.5,689.8 811.0,691.4 812.6,670.9 814.1,671.6 815.6,656.8 817.1,663.5 818.6,686.4 820.1,694.0 821.4,683.8 822.7,688.9 824.1,675.9 825.4,679.6 826.8,703.7 828.1,708.1 829.8,706.3 831.5,720.4 833.1,720.2 834.8,709.5 836.5,710.9 838.2,700.0 839.5,686.7 840.8,686.0 842.2,669.9 843.6,673.3 845.0,685.9 846.1,705.4 847.2,712.1 848.1,711.5 848.9,720.1 849.4,714.1 850.0,694.3 851.3,707.7 852.6,733.8 853.9,726.7 855.3,713.7 856.9,694.5 858.5,683.1 860.1,697.8 861.7,699.2 863.3,704.8 865.0,720.1 866.2,714.1 867.4,694.3 868.6,701.0 869.8,716.9 871.4,714.5 873.0,705.6 874.6,698.5 876.2,708.5 877.8,700.8 879.0,702.3 880.3,712.1 881.9,718.6 883.5,718.5 885.1,699.3 886.7,688.7 887.5,709.7 888.3,716.9 889.9,714.1 891.5,723.3 892.9,734.8 894.2,735.4 895.6,747.5 896.8,746.1 898.0,737.8 899.5,721.4 901.0,717.7 902.5,698.4 904.3,708.7 906.0,726.5 907.6,737.4 909.2,737.8 910.6,739.5 911.9,754.5 913.3,757.1 914.5,745.6 915.7,745.9 917.0,743.0 918.4,727.4 919.7,726.5 921.3,738.1 922.9,738.0 924.5,750.7 925.9,748.1 927.2,733.7 928.6,731.4 930.2,733.0 931.8,720.9 933.4,723.2 935.0,737.8 936.6,743.6 938.2,741.0 939.6,729.1 940.9,734.1 942.3,724.9 943.6,725.7 944.9,742.1 946.3,741.0 947.9,737.6 949.5,748.7 951.1,747.5 952.7,732.5 954.3,723.7 955.7,739.6 957.0,735.2 958.4,751.1 959.7,756.3 961.0,745.1 962.4,747.1 963.5,754.9 964.5,756.5 965.6,764.0 966.6,768.1 967.6,766.9 968.6,771.3 969.6,772.0 970.6,768.2 971.6,769.3 972.6,764.1 973.7,764.0 974.7,762.4 975.7,758.2 976.7,759.3 977.7,754.3 978.8,757.9 979.8,767.1 980.9,770.4 982.0,765.5 983.0,767.3 984.1,762.3 985.2,763.5 986.3,756.1 987.3,755.9 988.4,766.4 989.5,769.8 990.6,780.1 991.5,781.0 992.5,773.9 993.5,776.0 994.4,769.4 995.4,768.8 996.4,773.4 997.4,771.3 998.4,777.6 999.4,778.5 1000.4,775.5 1001.4,776.6 1002.3,770.2 1003.3,773.0 1004.3,768.8 1005.3,770.2 1006.3,777.6 1007.3,777.2 1008.3,781.7 1009.2,779.7 1010.2,773.7 1011.2,774.8 1012.1,767.6 1013.1,765.6 1014.1,767.9 1015.1,767.0 1016.1,770.1 1017.1,770.4 1018.1,768.3 1019.1,771.3 1020.0,765.7 1021.0,769.5 1022.0,767.2 1023.0,764.5 1024.1,766.6 1025.2,764.0 1026.2,760.9 1027.2,763.4 1028.2,757.0 1029.2,757.6 1030.2,760.2 1031.2,758.9 1032.2,763.9 1033.2,762.4 1034.3,755.3 1035.4,756.0 1036.5,748.7 1036.6,747.4 1036.8,748.8 1037.7,754.1 1038.6,752.1 1039.4,758.2 1040.4,757.4 1041.4,749.2 1042.4,750.4 1043.3,746.2 1044.3,742.5 1045.2,745.9 1046.2,742.5 1047.1,743.7 1048.0,752.2 1048.8,759.1 1049.7,754.1 1050.5,757.0 1051.4,752.2 1052.4,752.1 1053.5,761.0 1054.6,758.1 1055.7,764.2 1056.7,767.2 1057.8,762.7 1058.9,769.4 1059.9,767.6 1061.0,765.8 1062.1,770.3 1063.1,765.3 1064.2,766.8 1065.3,769.5 1066.5,768.6 1067.6,771.0 1068.8,769.8 1069.9,763.5 1071.0,761.6 1072.2,767.8 1073.3,764.8 1074.5,771.0 1075.4,772.4 1076.4,770.0 1077.4,773.1 1078.4,769.8 1079.4,773.2 1080.3,768.3 1081.3,771.0 1082.4,775.4 1083.4,775.2 1084.5,783.0 1085.6,783.0 1086.7,779.4 1087.9,781.2 1089.0,777.9 1089.9,779.5 1090.7,789.8 1091.6,791.6 1092.6,784.8 1093.7,786.3 1094.8,778.2 1095.8,776.2 1096.7,787.2 1097.6,790.5 1098.4,801.8 1099.4,804.0 1100.4,800.2 1101.3,803.0 1102.3,799.6 1103.3,803.9 1104.3,799.0 1105.3,801.0 1106.3,807.4 1107.3,806.7 1108.3,814.9 1109.4,815.8 1110.4,822.4 1111.4,823.7 1112.4,819.6 1113.4,824.3 1114.4,819.8 1115.4,824.0 1116.4,820.6 1117.4,820.9 1118.5,825.4 1119.6,822.4 1120.6,825.8 1121.7,821.7 1122.7,812.8 1123.7,809.5 1124.7,818.9 1125.6,822.6 1126.5,834.5 1127.5,839.5 1128.5,840.0 1129.5,843.9 1130.6,840.9 1131.6,846.1 1132.6,846.3 1133.7,843.8 1134.8,848.4 1135.8,845.1 1136.9,848.0 1137.7,839.0 1138.6,825.6 1139.5,817.2 1140.6,832.2 1141.7,842.5 1142.9,856.6 1144.0,859.3 1145.2,855.2 1146.3,857.4 1147.4,856.0 1148.4,847.6 1149.5,848.0 1150.6,842.0 1151.6,844.5 1152.7,852.5 1153.8,852.5 1154.9,860.0 1155.9,859.3 1157.0,853.7 1158.1,857.7 1159.1,853.1 1160.1,851.7 1161.1,856.9 1162.1,852.4 1163.1,857.7 1164.1,854.5 1165.1,856.6 1166.3,858.1 1167.4,854.9 1168.5,856.6 1169.7,861.5 1170.8,860.3 1172.0,866.8 1172.6,867.6 1173.3,865.1" fill="none" stroke="#FF0000" stroke-width="1" shape-rendering="crispEdges"/>
<polyline points="65.0,679.4 67.0,679.4 73.3,690.3 80.3,703.6 87.3,701.2 95.2,705.2 101.4,713.0 108.4,703.6 115.5,698.9 120.2,700.5 125.6,712.2 131.9,691.9 136.6,686.4 141.2,686.4 146.7,697.3 151.4,664.5 160.8,634.8 167.8,693.4 172.5,726.2 180.3,677.0 184.2,674.7 189.7,685.6 195.2,704.4 200.6,707.5 206.1,710.6 213.1,711.4 219.4,714.5 224.1,701.2 231.9,688.8 236.6,688.8 242.0,681.7 246.7,694.2 250.6,691.9 255.3,666.9 256.9,647.3 257.4,639.8 259.0,639.0 261.4,657.5 265.5,659.1 268.7,639.8 271.9,599.5 274.3,586.6 276.7,620.5 278.3,647.8 284.0,654.3 288.8,646.2 293.6,614.0 300.1,606.0 302.5,571.3 304.9,599.5 307.3,633.3 314.6,607.6 320.2,593.1 324.2,617.2 332.3,625.3 335.5,607.6 337.4,561.7 339.5,596.3 343.6,635.0 346.5,567.3 349.2,614.0 351.6,652.7 355.6,635.8 360.5,633.3 364.2,564.9 367.7,618.9 370.9,662.3 375.0,651.1 382.5,568.9 384.6,617.2 387.9,672.0 391.9,659.9 394.3,663.9 400.4,602.8 404.0,659.1 408.0,578.6 413.6,692.9 416.0,683.3 418.4,692.9 422.5,647.8 425.7,573.8 428.1,654.3 430.5,654.3 433.7,665.6 439.4,628.5 442.6,585.0 446.6,644.6 452.3,582.6 455.0,618.9 456.4,633.3 459.7,639.0 464.5,643.8 466.9,635.0 469.0,589.9 471.7,623.7 473.3,655.9 476.6,652.7 478.7,633.3 482.2,659.1 484.6,638.2 486.7,595.5 489.5,644.6 491.1,668.8 493.5,680.0 495.1,655.1 498.3,691.3 503.1,615.6 505.6,647.8 507.2,659.1 512.5,581.0 515.2,638.2 517.6,670.4 520.9,660.7 523.3,667.2 529.7,583.4 532.1,651.1 536.2,668.8 540.2,673.6 545.0,633.3 547.4,599.5 550.6,649.4 555.5,613.2 557.9,668.0 561.9,680.0 564.3,667.2 565.9,684.9 569.2,659.1 572.7,594.7 575.6,663.9 578.0,675.2 581.2,609.2 586.1,662.3 590.1,573.0 593.3,667.2 595.7,691.3 598.1,648.6 600.6,691.3 605.4,660.7 607.8,621.3 610.2,651.1 616.7,601.1 620.7,651.1 622.6,631.7 624.7,651.1 627.9,643.0 633.6,589.1 638.4,639.8 642.4,663.9 646.5,659.1 650.0,618.9 650.0,604.3 653.0,654.6 655.1,676.7 657.5,672.7 659.1,594.2 662.1,672.7 665.1,694.8 669.1,658.6 672.2,674.7 676.2,594.2 679.2,660.6 683.2,680.7 685.2,630.4 687.3,690.8 693.3,593.2 698.3,664.6 702.3,680.7 707.4,654.6 711.8,617.3 716.4,666.6 719.8,634.4 723.5,678.7 727.5,664.6 731.5,652.6 736.5,629.4 743.6,686.8 744.9,694.9 746.3,688.2 747.6,696.8 749.0,692.8 750.3,670.5 751.6,664.6 753.5,655.1 755.3,635.5 756.7,651.9 758.2,682.8 759.7,700.8 761.4,691.1 763.0,697.0 764.7,686.8 766.4,673.3 768.0,675.5 769.7,660.7 771.4,657.6 773.2,672.0 775.0,673.5 776.8,690.8 778.1,688.5 779.5,671.5 780.8,666.6 782.3,678.1 783.8,668.8 785.3,685.8 786.9,684.7 788.2,684.7 789.5,699.1 790.9,700.8 792.5,685.2 794.1,680.8 795.7,659.9 797.3,650.5 799.0,666.4 800.6,670.7 802.3,689.9 804.0,698.8 805.3,696.0 806.6,707.6 808.0,704.9 809.5,688.6 811.0,690.2 812.6,669.7 814.1,670.4 815.6,655.6 817.1,662.3 818.6,685.2 820.1,692.8 821.4,682.6 822.7,687.7 824.1,674.7 825.4,678.4 826.8,702.5 828.1,706.9 829.8,705.1 831.5,719.2 833.1,719.0 834.8,708.3 836.5,709.7 838.2,698.8 839.5,685.5 840.8,684.8 842.2,668.7 843.6,672.1 845.0,684.7 846.1,704.2 847.2,710.9 848.1,710.3 848.9,718.9 849.4,712.9 850.0,693.1 851.3,706.5 852.6,732.6 853.9,725.5 855.3,712.5 856.9,693.3 858.5,681.9 860.1,696.6 861.7,698.0 863.3,703.6 865.0,718.9 866.2,712.9 867.4,693.1 868.6,699.8 869.8,715.7 871.4,713.3 873.0,704.4 874.6,697.3 876.2,707.3 877.8,699.6 879.0,701.1 880.3,710.9 881.9,717.4 883.5,717.3 885.1,698.1 886.7,687.5 887.5,708.5 888.3,715.7 889.9,712.9 891.5,722.1 892.9,733.6 894.2,734.2 895.6,746.3 896.8,744.9 898.0,736.6 899.5,720.2 901.0,716.5 902.5,697.2 904.3,707.5 906.0,725.3 907.6,736.2 909.2,736.6 910.6,738.3 911.9,753.3 913.3,755.9 914.5,744.4 915.7,744.7 917.0,741.8 918.4,726.2 919.7,725.3 921.3,736.9 922.9,736.8 924.5,749.5 925.9,746.9 927.2,732.5 928.6,730.2 930.2,731.8 931.8,719.7 933.4,722.0 935.0,736.6 936.6,742.4 938.2,739.8 939.6,727.9 940.9,732.9 942.3,723.7 943.6,724.5 944.9,740.9 946.3,739.8 947.9,736.4 949.5,747.5 951.1,746.3 952.7,731.3 954.3,730.2 955.9,745.3 957.6,752.7 958.9,751.9 960.2,765.3 961.6,762.4 962.6,760.8 963.6,763.9 964.6,761.4 965.6,762.4 966.6,767.3 967.5,767.9 968.5,775.4 969.5,775.6 970.4,781.7 971.4,780.2 972.4,773.4 973.5,775.1 974.5,768.8 975.5,770.1 976.5,777.4 977.5,775.6 978.5,781.7 979.6,777.6 980.6,769.8 981.7,765.6 982.8,774.0 983.9,773.6 984.9,781.7 986.0,777.7 987.1,769.7 988.1,765.6 989.2,775.2 990.3,776.5 991.4,786.5 992.4,785.0 993.4,777.8 994.4,781.0 995.4,775.3 996.4,775.8 997.4,782.7 998.4,782.7 999.4,786.5 1000.4,784.6 1001.4,777.8 1002.4,779.5 1003.4,775.3 1004.5,776.0 1005.5,783.1 1006.5,782.2 1007.5,788.1 1008.5,786.6 1009.6,779.1 1010.7,776.9 1011.8,778.1 1012.8,774.3 1013.9,776.9 1015.0,781.6 1016.1,783.0 1017.1,788.1 1018.2,787.6 1019.3,779.9 1020.4,780.1 1021.4,781.6 1022.4,777.0 1023.4,780.7 1024.4,776.9 1025.4,773.6 1026.4,773.7 1027.4,769.4 1028.4,768.8 1029.4,771.9 1030.4,770.3 1031.4,773.7 1032.4,773.7 1033.4,767.9 1034.4,767.8 1035.5,760.5 1036.5,757.6 1037.3,762.0 1038.2,760.3 1039.1,769.2 1040.0,768.8 1040.9,764.1 1041.9,766.5 1042.8,761.6 1043.7,763.1 1044.5,770.2 1045.4,772.8 1046.2,763.7 1047.1,756.5 1048.0,762.2 1048.8,763.2 1049.7,771.0 1050.5,772.4 1051.4,765.7 1052.2,767.6 1053.4,771.9 1054.5,772.1 1055.7,777.9 1056.5,782.7 1057.4,781.0 1058.2,786.4 1059.1,786.9 1059.9,781.0 1060.8,783.0 1061.8,785.1 1062.8,783.2 1063.8,789.0 1064.8,784.6 1065.8,791.3 1066.8,789.9 1067.8,785.2 1068.9,788.3 1070.0,780.5 1071.0,781.3 1072.1,785.5 1073.2,784.0 1074.3,792.0 1075.3,791.6 1076.4,790.0 1077.5,795.9 1078.5,792.7 1079.6,796.7 1080.7,799.0 1081.9,793.4 1083.0,795.0 1083.9,801.3 1084.7,801.3 1085.6,807.0 1086.4,805.7 1087.3,797.9 1088.1,796.7 1089.3,802.8 1090.4,804.6 1091.6,812.1 1092.7,814.1 1093.9,806.9 1095.0,808.7 1096.1,816.4 1097.3,817.2 1098.4,824.1 1099.4,828.0 1100.5,824.6 1101.5,830.0 1102.5,826.7 1103.5,830.9 1104.6,834.0 1105.7,832.6 1106.7,838.2 1107.8,839.5 1109.0,839.5 1110.1,846.0 1111.2,846.3 1112.1,842.7 1112.9,844.2 1113.8,839.5 1114.7,840.3 1115.5,847.4 1116.4,848.0 1117.2,843.9 1118.1,847.1 1118.9,844.6 1119.8,846.0 1120.6,850.7 1121.5,851.4 1122.6,839.6 1123.7,832.6 1124.7,847.6 1125.8,860.0 1126.9,859.9 1128.1,865.2 1129.2,863.4 1130.1,863.3 1130.9,869.8 1131.8,870.2 1132.9,868.4 1134.0,874.1 1135.2,873.7 1136.0,868.4 1136.9,869.2 1137.7,865.1 1138.6,857.0 1139.5,855.3 1140.3,846.3 1141.2,851.9 1142.0,866.3 1142.9,872.0 1144.0,871.4 1145.2,876.4 1146.3,875.4 1147.4,870.8 1148.4,870.5 1149.5,864.4 1150.6,863.4 1151.7,870.2 1152.9,868.5 1154.0,875.4 1155.1,875.0 1156.3,866.6 1157.4,866.8 1158.5,870.0 1159.6,869.0 1160.6,873.8 1161.7,873.7 1162.8,870.5 1164.0,871.6 1165.1,868.5 1166.2,868.0 1167.2,873.4 1168.3,870.4 1169.4,873.7 1170.4,876.5 1171.4,873.4 1172.3,880.7 1173.3,878.8" fill="none" stroke="#00FFFF" stroke-width="1" shape-rendering="crispEdges"/>
<rect x="1131" y="134" width="42" height="23" fill="#000"/>
<g fill="#fff"><rect x="1135" y="137" width="8" height="1"/><rect x="1134" y="138" width="10" height="1"/><rect x="1134" y="139" width="2" height="1"/><rect x="1141" y="139" width="3" height="1"/><rect x="1134" y="140" width="8" height="1"/><rect x="1134" y="141" width="10" height="1"/><rect x="1133" y="142" width="11" height="1"/><rect x="1134" y="143" width="2" height="1"/><rect x="1141" y="143" width="3" height="1"/><rect x="1134" y="144" width="10" height="1"/><rect x="1134" y="145" width="9" height="1"/><rect x="1134" y="147" width="10" height="3"/><rect x="1137" y="150" width="3" height="5"/></g>
<polyline points="1147.5,146.5 1152.8,138 1158.2,146.5 1163.6,154 1169.5,146.5 1147.5,146.5" fill="none" stroke="#fff" stroke-width="1.4" shape-rendering="auto"/>
</svg>
<div class="t ylab" style="right:1221px;top:127px">-20.0</div>
<div class="t ylab" style="right:1221px;top:181px">-30.0</div>
<div class="t ylab" style="right:1221px;top:236px">-40.0</div>
<div class="t ylab" style="right:1221px;top:291px">-50.0</div>
<div class="t ylab" style="right:1221px;top:345px">-60.0</div>
<div class="t ylab" style="right:1221px;top:400px">-70.0</div>
<div class="t ylab" style="right:1221px;top:455px">-80.0</div>
<div class="t ylab" style="right:1221px;top:509px">-90.0</div>
<div class="t" style="left:0;width:1240px;text-align:center;top:116px;font-size:12.4px">Left Channel</div>
<div class="t" style="left:-82px;width:200px;text-align:center;top:324px;font-size:12px;letter-spacing:0.6px;transform:rotate(-90deg)">Relative Amplitude (dB)</div>
<div class="t ylab" style="right:1221px;top:530px">-20.0</div>
<div class="t ylab" style="right:1221px;top:584px">-30.0</div>
<div class="t ylab" style="right:1221px;top:639px">-40.0</div>
<div class="t ylab" style="right:1221px;top:694px">-50.0</div>
<div class="t ylab" style="right:1221px;top:748px">-60.0</div>
<div class="t ylab" style="right:1221px;top:803px">-70.0</div>
<div class="t ylab" style="right:1221px;top:858px">-80.0</div>
<div class="t ylab" style="right:1221px;top:912px">-90.0</div>
<div class="t" style="left:0;width:1240px;text-align:center;top:519px;font-size:12.4px">Right Channel</div>
<div class="t" style="left:-82px;width:200px;text-align:center;top:727px;font-size:12px;letter-spacing:0.6px;transform:rotate(-90deg)">Relative Amplitude (dB)</div>
<div class="a" style="left:65px;top:918px;width:1110px;height:16px;background-color:#F4F3EE;background-image:repeating-conic-gradient(#fff 0 25%,#ECE9D8 0 50%);background-size:2px 2px"></div>
<div class="xpb" style="left:65px;top:918px;width:17px;height:16px"></div>
<div class="a" style="left:70px;top:922px;width:0;height:0;border-top:4px solid transparent;border-bottom:4px solid transparent;border-right:4px solid #000"></div>
<div class="xpb" style="left:89px;top:918px;width:17px;height:16px"></div>
<div class="xpb" style="left:1158px;top:918px;width:17px;height:16px"></div>
<div class="a" style="left:1164px;top:922px;width:0;height:0;border-top:4px solid transparent;border-bottom:4px solid transparent;border-left:4px solid #000"></div>
<div class="t" style="left:87px;width:81px;text-align:center;top:939px;font-size:12px">20</div>
<div class="t" style="left:148px;width:81px;text-align:center;top:939px;font-size:12px">30</div>
<div class="t" style="left:191px;width:81px;text-align:center;top:939px;font-size:12px">40</div>
<div class="t" style="left:251px;width:81px;text-align:center;top:939px;font-size:12px">60</div>
<div class="t" style="left:295px;width:81px;text-align:center;top:939px;font-size:12px">80</div>
<div class="t" style="left:328px;width:81px;text-align:center;top:939px;font-size:12px">100</div>
<div class="t" style="left:432px;width:81px;text-align:center;top:939px;font-size:12px">200</div>
<div class="t" style="left:492px;width:81px;text-align:center;top:939px;font-size:12px">300</div>
<div class="t" style="left:536px;width:81px;text-align:center;top:939px;font-size:12px">400</div>
<div class="t" style="left:596px;width:81px;text-align:center;top:939px;font-size:12px">600</div>
<div class="t" style="left:639px;width:81px;text-align:center;top:939px;font-size:12px">800</div>
<div class="t" style="left:673px;width:81px;text-align:center;top:939px;font-size:12px">1.0k</div>
<div class="t" style="left:777px;width:81px;text-align:center;top:939px;font-size:12px">2.0k</div>
<div class="t" style="left:837px;width:81px;text-align:center;top:939px;font-size:12px">3.0k</div>
<div class="t" style="left:880px;width:81px;text-align:center;top:939px;font-size:12px">4.0k</div>
<div class="t" style="left:941px;width:81px;text-align:center;top:939px;font-size:12px">6.0k</div>
<div class="t" style="left:984px;width:81px;text-align:center;top:939px;font-size:12px">8.0k</div>
<div class="t" style="left:1018px;width:81px;text-align:center;top:939px;font-size:12px">10.0k</div>
<div class="t" style="left:1121px;width:81px;text-align:center;top:939px;font-size:12px">20.0k</div>
<div class="t" style="left:541px;width:200px;text-align:center;top:950px;font-size:12px">Frequency (Hz)</div>
<div class="t" style="left:1203px;top:119px;font-size:12px;text-decoration:underline">Overlays</div>
<div class="t" style="left:1180px;top:135px;font-size:12px;transform:rotate(-90deg);transform-origin:center">Set</div>
<div class="t" style="left:1197px;top:136px;font-size:12px;transform:rotate(-90deg);transform-origin:center">On</div>
<div class="xpb" style="left:1182px;top:153px;width:14px;height:14px"></div>
<div class="t" style="left:1182px;width:14px;text-align:center;top:154px;font-size:12px">1</div>
<svg class="a" style="left:1199px;top:154px" width="14" height="14" shape-rendering="crispEdges"><rect width="14" height="14" fill="#fff"/><rect width="13" height="1" fill="#8A887C"/><rect width="1" height="13" fill="#8A887C"/><rect x="1" y="1" width="11" height="1" fill="#6E6C62"/><rect x="1" y="1" width="1" height="11" fill="#6E6C62"/><rect x="1" y="12" width="12" height="1" fill="#F1EFE2"/><rect x="12" y="1" width="1" height="12" fill="#F1EFE2"/><rect x="3" y="5" width="1" height="3" fill="#000"/><rect x="4" y="6" width="1" height="3" fill="#000"/><rect x="5" y="7" width="1" height="3" fill="#000"/><rect x="6" y="6" width="1" height="3" fill="#000"/><rect x="7" y="5" width="1" height="3" fill="#000"/><rect x="8" y="4" width="1" height="3" fill="#000"/><rect x="9" y="3" width="1" height="3" fill="#000"/></svg>
<div class="t" style="left:1215px;top:156px;font-size:11.4px;color:#FF0000">Overlay 1</div>
<div class="xpb" style="left:1182px;top:169px;width:14px;height:14px"></div>
<div class="t" style="left:1182px;width:14px;text-align:center;top:170px;font-size:12px">2</div>
<svg class="a" style="left:1199px;top:170px" width="14" height="14" shape-rendering="crispEdges"><rect width="14" height="14" fill="#fff"/><rect width="13" height="1" fill="#8A887C"/><rect width="1" height="13" fill="#8A887C"/><rect x="1" y="1" width="11" height="1" fill="#6E6C62"/><rect x="1" y="1" width="1" height="11" fill="#6E6C62"/><rect x="1" y="12" width="12" height="1" fill="#F1EFE2"/><rect x="12" y="1" width="1" height="12" fill="#F1EFE2"/></svg>
<div class="t" style="left:1215px;top:172px;font-size:11.4px;color:#FF00FF">Overlay 2</div>
<div class="xpb" style="left:1182px;top:185px;width:14px;height:14px"></div>
<div class="t" style="left:1182px;width:14px;text-align:center;top:186px;font-size:12px">3</div>
<svg class="a" style="left:1199px;top:186px" width="14" height="14" shape-rendering="crispEdges"><rect width="14" height="14" fill="#fff"/><rect width="13" height="1" fill="#8A887C"/><rect width="1" height="13" fill="#8A887C"/><rect x="1" y="1" width="11" height="1" fill="#6E6C62"/><rect x="1" y="1" width="1" height="11" fill="#6E6C62"/><rect x="1" y="12" width="12" height="1" fill="#F1EFE2"/><rect x="12" y="1" width="1" height="12" fill="#F1EFE2"/></svg>
<div class="t" style="left:1215px;top:188px;font-size:11.4px;color:#0000FF">Overlay 3</div>
<div class="xpb" style="left:1182px;top:201px;width:14px;height:14px"></div>
<div class="t" style="left:1182px;width:14px;text-align:center;top:202px;font-size:12px">4</div>
<svg class="a" style="left:1199px;top:202px" width="14" height="14" shape-rendering="crispEdges"><rect width="14" height="14" fill="#fff"/><rect width="13" height="1" fill="#8A887C"/><rect width="1" height="13" fill="#8A887C"/><rect x="1" y="1" width="11" height="1" fill="#6E6C62"/><rect x="1" y="1" width="1" height="11" fill="#6E6C62"/><rect x="1" y="12" width="12" height="1" fill="#F1EFE2"/><rect x="12" y="1" width="1" height="12" fill="#F1EFE2"/><rect x="3" y="5" width="1" height="3" fill="#000"/><rect x="4" y="6" width="1" height="3" fill="#000"/><rect x="5" y="7" width="1" height="3" fill="#000"/><rect x="6" y="6" width="1" height="3" fill="#000"/><rect x="7" y="5" width="1" height="3" fill="#000"/><rect x="8" y="4" width="1" height="3" fill="#000"/><rect x="9" y="3" width="1" height="3" fill="#000"/></svg>
<div class="t" style="left:1215px;top:204px;font-size:11.4px;color:#00FFFF">Overlay 4</div>
<div class="xpb" style="left:1179px;top:218px;width:64px;height:18px"></div>
<div class="t" style="left:1184px;top:221px;font-size:12px">Options...</div>
<div class="t" style="left:1180px;top:538px;font-size:12px;transform:rotate(-90deg);transform-origin:center">Set</div>
<div class="t" style="left:1197px;top:539px;font-size:12px;transform:rotate(-90deg);transform-origin:center">On</div>
<div class="xpb" style="left:1182px;top:556px;width:14px;height:14px"></div>
<div class="t" style="left:1182px;width:14px;text-align:center;top:557px;font-size:12px">1</div>
<svg class="a" style="left:1199px;top:557px" width="14" height="14" shape-rendering="crispEdges"><rect width="14" height="14" fill="#fff"/><rect width="13" height="1" fill="#8A887C"/><rect width="1" height="13" fill="#8A887C"/><rect x="1" y="1" width="11" height="1" fill="#6E6C62"/><rect x="1" y="1" width="1" height="11" fill="#6E6C62"/><rect x="1" y="12" width="12" height="1" fill="#F1EFE2"/><rect x="12" y="1" width="1" height="12" fill="#F1EFE2"/><rect x="3" y="5" width="1" height="3" fill="#000"/><rect x="4" y="6" width="1" height="3" fill="#000"/><rect x="5" y="7" width="1" height="3" fill="#000"/><rect x="6" y="6" width="1" height="3" fill="#000"/><rect x="7" y="5" width="1" height="3" fill="#000"/><rect x="8" y="4" width="1" height="3" fill="#000"/><rect x="9" y="3" width="1" height="3" fill="#000"/></svg>
<div class="t" style="left:1215px;top:559px;font-size:11.4px;color:#FF0000">Overlay 1</div>
<div class="xpb" style="left:1182px;top:572px;width:14px;height:14px"></div>
<div class="t" style="left:1182px;width:14px;text-align:center;top:573px;font-size:12px">2</div>
<svg class="a" style="left:1199px;top:573px" width="14" height="14" shape-rendering="crispEdges"><rect width="14" height="14" fill="#fff"/><rect width="13" height="1" fill="#8A887C"/><rect width="1" height="13" fill="#8A887C"/><rect x="1" y="1" width="11" height="1" fill="#6E6C62"/><rect x="1" y="1" width="1" height="11" fill="#6E6C62"/><rect x="1" y="12" width="12" height="1" fill="#F1EFE2"/><rect x="12" y="1" width="1" height="12" fill="#F1EFE2"/></svg>
<div class="t" style="left:1215px;top:575px;font-size:11.4px;color:#FF00FF">Overlay 2</div>
<div class="xpb" style="left:1182px;top:588px;width:14px;height:14px"></div>
<div class="t" style="left:1182px;width:14px;text-align:center;top:589px;font-size:12px">3</div>
<svg class="a" style="left:1199px;top:589px" width="14" height="14" shape-rendering="crispEdges"><rect width="14" height="14" fill="#fff"/><rect width="13" height="1" fill="#8A887C"/><rect width="1" height="13" fill="#8A887C"/><rect x="1" y="1" width="11" height="1" fill="#6E6C62"/><rect x="1" y="1" width="1" height="11" fill="#6E6C62"/><rect x="1" y="12" width="12" height="1" fill="#F1EFE2"/><rect x="12" y="1" width="1" height="12" fill="#F1EFE2"/></svg>
<div class="t" style="left:1215px;top:591px;font-size:11.4px;color:#0000FF">Overlay 3</div>
<div class="xpb" style="left:1182px;top:604px;width:14px;height:14px"></div>
<div class="t" style="left:1182px;width:14px;text-align:center;top:605px;font-size:12px">4</div>
<div class="a" style="left:1184px;top:606px;width:10px;height:10px;border:1px dotted #000"></div>
<svg class="a" style="left:1199px;top:605px" width="14" height="14" shape-rendering="crispEdges"><rect width="14" height="14" fill="#fff"/><rect width="13" height="1" fill="#8A887C"/><rect width="1" height="13" fill="#8A887C"/><rect x="1" y="1" width="11" height="1" fill="#6E6C62"/><rect x="1" y="1" width="1" height="11" fill="#6E6C62"/><rect x="1" y="12" width="12" height="1" fill="#F1EFE2"/><rect x="12" y="1" width="1" height="12" fill="#F1EFE2"/><rect x="3" y="5" width="1" height="3" fill="#000"/><rect x="4" y="6" width="1" height="3" fill="#000"/><rect x="5" y="7" width="1" height="3" fill="#000"/><rect x="6" y="6" width="1" height="3" fill="#000"/><rect x="7" y="5" width="1" height="3" fill="#000"/><rect x="8" y="4" width="1" height="3" fill="#000"/><rect x="9" y="3" width="1" height="3" fill="#000"/></svg>
<div class="t" style="left:1215px;top:607px;font-size:11.4px;color:#00FFFF">Overlay 4</div>
<div class="xpb" style="left:1179px;top:621px;width:64px;height:18px"></div>
<div class="t" style="left:1184px;top:624px;font-size:12px">Options...</div>
<div class="a" style="left:8px;top:968px;width:118px;height:17px;border:1px solid;border-color:#A0A0A0 #fff #fff #A0A0A0"></div>
<div class="t" style="left:12px;top:971px;font-size:12px">Stopped</div>
<div class="a" style="left:128px;top:968px;width:101px;height:17px;border:1px solid;border-color:#A0A0A0 #fff #fff #A0A0A0"></div>
<div class="t" style="left:132px;top:971px;font-size:12px">Post Process</div>
<div class="a" style="left:231px;top:968px;width:71px;height:17px;border:1px solid;border-color:#A0A0A0 #fff #fff #A0A0A0"></div>
<div class="t" style="left:235px;top:971px;font-size:12px">48000 Hz</div>
<div class="a" style="left:304px;top:968px;width:51px;height:17px;border:1px solid;border-color:#A0A0A0 #fff #fff #A0A0A0"></div>
<div class="t" style="left:308px;top:971px;font-size:12px">24 Bit</div>
<div class="a" style="left:357px;top:968px;width:61px;height:17px;border:1px solid;border-color:#A0A0A0 #fff #fff #A0A0A0"></div>
<div class="t" style="left:361px;top:971px;font-size:12px">Stereo</div>
<div class="a" style="left:420px;top:968px;width:100px;height:17px;border:1px solid;border-color:#A0A0A0 #fff #fff #A0A0A0"></div>
<div class="t" style="left:424px;top:971px;font-size:12px">FFT 65536 pts</div>
<div class="a" style="left:523px;top:968px;width:72px;height:17px;border:1px solid;border-color:#A0A0A0 #fff #fff #A0A0A0"></div>
<div class="t" style="left:527px;top:971px;font-size:12px">Hanning</div>

<!-- status bar -->
<div class="hline" style="top:964px"></div>
<div class="a" style="left:5px;top:965px;width:1274px;height:1px;background:#fff"></div>
<div class="a" style="left:5px;top:988px;width:1274px;height:1px;background:#fff"></div>
<div class="hline" style="top:989px"></div>
</body></html>
